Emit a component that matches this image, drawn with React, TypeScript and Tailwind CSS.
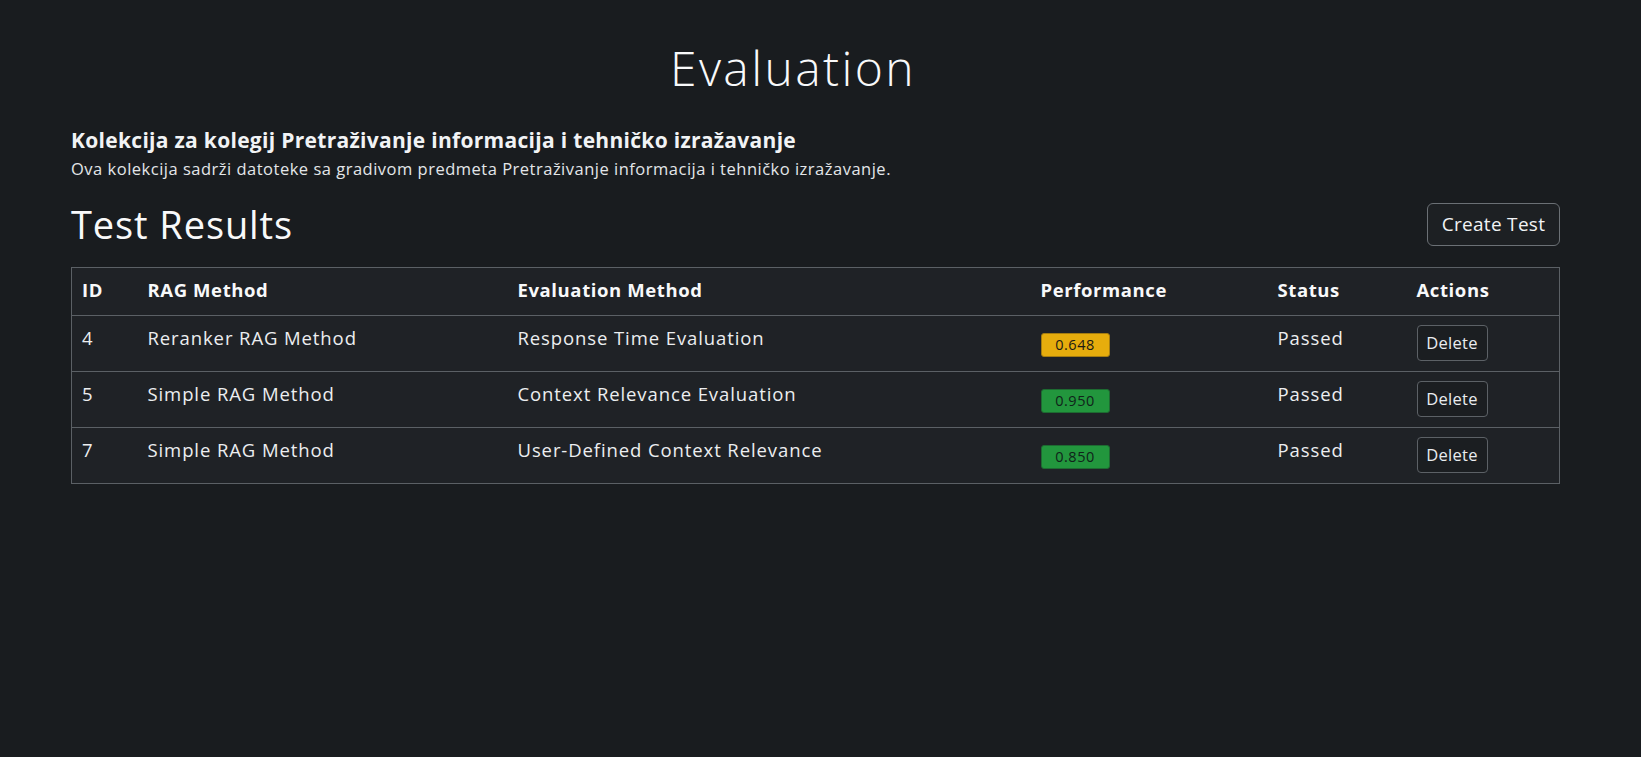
import React from "react";

type Row = {
  id: number;
  rag: string;
  evaluation: string;
  score: string;
  tone: "warn" | "ok";
  status: string;
};

const rows: Row[] = [
  { id: 4, rag: "Reranker RAG Method", evaluation: "Response Time Evaluation", score: "0.648", tone: "warn", status: "Passed" },
  { id: 5, rag: "Simple RAG Method", evaluation: "Context Relevance Evaluation", score: "0.950", tone: "ok", status: "Passed" },
  { id: 7, rag: "Simple RAG Method", evaluation: "User-Defined Context Relevance", score: "0.850", tone: "ok", status: "Passed" },
];

export default function App() {
  return (
    <div className="min-h-screen w-full bg-[#191c1f] text-[#f1f3f5] pl-[71px] pr-[81px] font-['Open_Sans',sans-serif]">
      <h1 className="pt-[38px] pr-[45px] text-center text-[48px] font-light leading-[60px] tracking-[2.4px] text-[#f8f9fa]">
        Evaluation
      </h1>

      <div className="mt-[29px]">
        <h5 className="text-[21px] font-bold leading-[26px] tracking-[0.3px] text-[#f1f3f5]">
          Kolekcija za kolegij Pretraživanje informacija i tehničko izražavanje
        </h5>
        <p className="mt-[5px] text-[16.5px] leading-[22px] tracking-[0.5px] text-[#e3e6e9]">
          Ova kolekcija sadrži datoteke sa gradivom predmeta Pretraživanje informacija i tehničko izražavanje.
        </p>
      </div>

      <div className="mt-[22px] flex items-center justify-between">
        <h2 className="text-[38px] font-normal leading-[44px] tracking-[0.9px] text-[#f8f9fa]">Test Results</h2>
        <button className="h-[43px] w-[133px] rounded-[6px] border border-[#6b7075] bg-[#1d2023] text-[19px] tracking-[0.3px] text-[#f1f3f5]">
          Create Test
        </button>
      </div>

      <table className="mt-[21px] w-full border-collapse border border-[#5b6065] bg-[#1f2226] text-left">
        <colgroup>
          <col className="w-[66px]" />
          <col className="w-[370px]" />
          <col className="w-[523px]" />
          <col className="w-[237px]" />
          <col className="w-[139px]" />
          <col />
        </colgroup>
        <thead>
          <tr className="h-[48px] border-b border-[#5b6065]">
            {["ID", "RAG Method", "Evaluation Method", "Performance", "Status", "Actions"].map((h) => (
              <th key={h} className="px-[10px] pb-[4px] text-[18.5px] font-bold tracking-[0.6px] text-[#f8f9fa]">
                {h}
              </th>
            ))}
          </tr>
        </thead>
        <tbody>
          {rows.map((r) => (
            <tr key={r.id} className="h-[56px] border-b border-[#5b6065] align-top text-[18.5px] tracking-[0.9px] text-[#eceef0]">
              <td className="px-[10px] pt-[10px] leading-[24px]">{r.id}</td>
              <td className="px-[10px] pt-[10px] leading-[24px]">{r.rag}</td>
              <td className="px-[10px] pt-[10px] leading-[24px]">{r.evaluation}</td>
              <td className="px-[10px] pt-[13px]">
                <span
                  className={
                    r.tone === "warn"
                      ? "inline-flex h-[24px] w-[69px] items-center justify-center rounded-[3px] border border-[#a57d10] bg-[#e6ad0d] text-[14.5px] font-medium tracking-[0.5px] text-[#1c1a14]"
                      : "inline-flex h-[24px] w-[69px] items-center justify-center rounded-[3px] border border-[#1d6b31] bg-[#22963d] text-[14.5px] font-medium tracking-[0.5px] text-[#10231a]"
                  }
                >
                  {r.score}
                </span>
              </td>
              <td className="px-[10px] pt-[10px] leading-[24px]">{r.status}</td>
              <td className="px-[10px] pt-[9px]">
                <button className="h-[36px] w-[71px] rounded-[4px] border border-[#5c6166] bg-[#1b1e21] text-[16.5px] tracking-[0.3px] text-[#e9ecef]">
                  Delete
                </button>
              </td>
            </tr>
          ))}
        </tbody>
      </table>
    </div>
  );
}
